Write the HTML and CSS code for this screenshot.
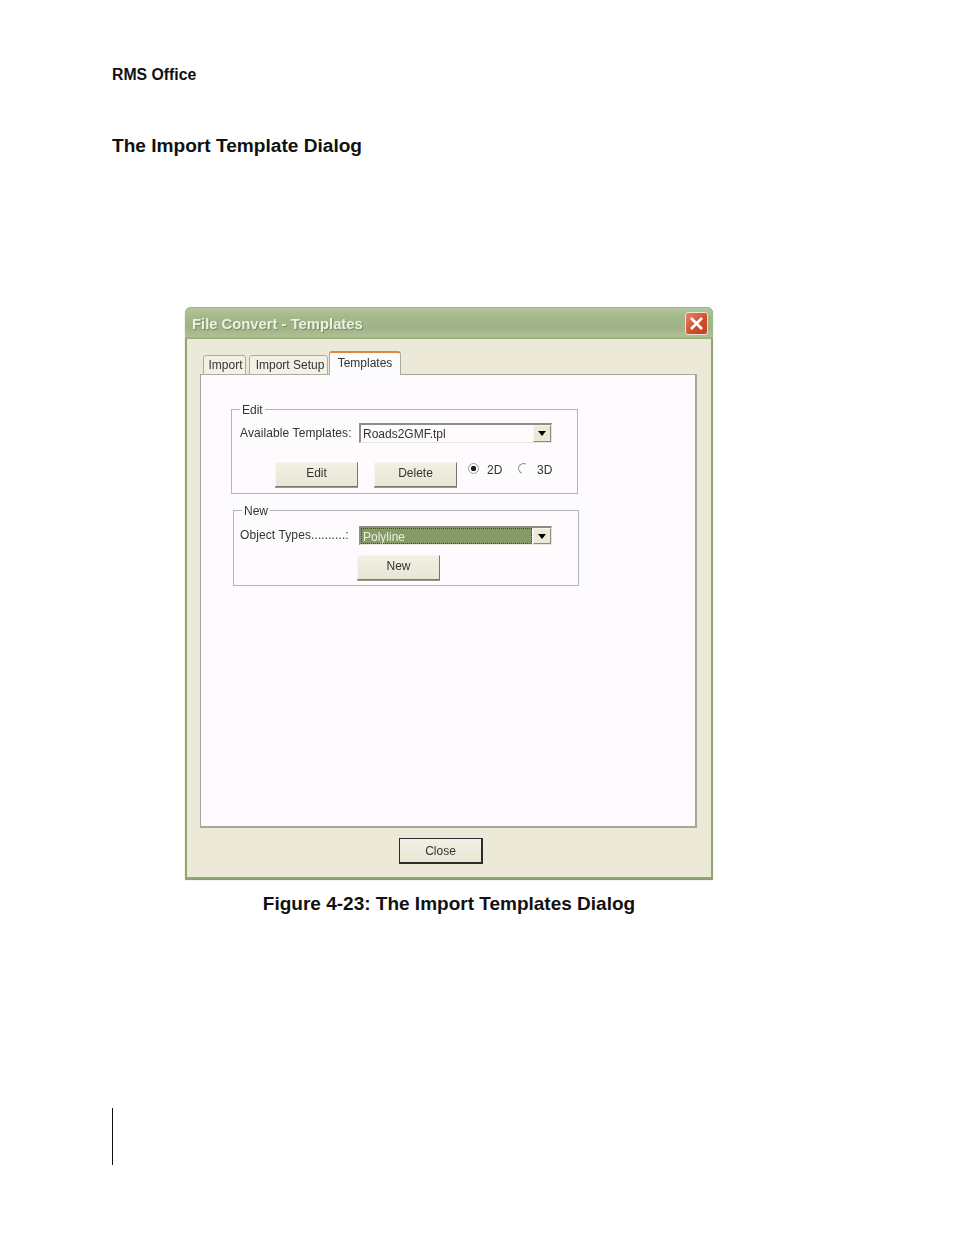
FILE: index.html
```html
<!DOCTYPE html>
<html lang="en">
<head>
<meta charset="utf-8">
<title>The Import Template Dialog</title>
<link rel="stylesheet" href="styles.css">
</head>
<body>
<main class="page">
  <p class="running">RMS Office</p>
  <h1 class="heading">The Import Template Dialog</h1>
  <figure class="figure">
    <div class="dialog">
      <div class="titlebar">
        <span class="title">File Convert - Templates</span>
        <span class="close-x">
          <svg width="23" height="23" viewBox="0 0 23 23"><path d="M6 6 L17 17 M17 6 L6 17" stroke="#fff" stroke-width="2.6" fill="none"/></svg>
        </span>
      </div>
      <div class="body">
        <div class="tabs">
          <span class="tab tab-import">Import</span>
          <span class="tab tab-setup">Import Setup</span>
          <span class="tab tab-active">Templates</span>
        </div>
        <div class="panel">
          <section class="group group-edit">
            <span class="legend legend-edit">Edit</span>
            <div class="row">
              <span class="label">Available Templates:</span>
              <div class="combo"><span class="combo-value">Roads2GMF.tpl</span><span class="arrow"><i class="tri"></i></span></div>
            </div>
            <div class="row row-actions">
              <span class="btn btn-edit">Edit</span>
              <span class="btn btn-delete">Delete</span>
              <span class="radio radio-2d"><i class="dot dot-on"></i>2D</span>
              <span class="radio radio-3d"><i class="dot dot-off"></i>3D</span>
            </div>
          </section>
          <section class="group group-new">
            <span class="legend legend-new">New</span>
            <div class="row">
              <span class="label label-new">Object Types..........:</span>
              <div class="combo combo-new"><span class="combo-value combo-selected">Polyline</span><span class="arrow"><i class="tri"></i></span></div>
            </div>
            <span class="btn btn-new">New</span>
          </section>
        </div>
        <div class="footer"><span class="btn btn-close">Close</span></div>
      </div>
    </div>
    <figcaption class="caption">Figure 4-23: The Import Templates Dialog</figcaption>
  </figure>
  <div class="rule"></div>
</main>
</body>
</html>
```
FILE: styles.css
```css
* { box-sizing: border-box; }
html, body { margin: 0; padding: 0; background: #fff; }
body { width: 954px; height: 1235px; overflow: hidden; font-family: "Liberation Sans", Arial, sans-serif; color: #111; }
.page { padding: 66px 0 0 112px; }
.running { margin: 0; font-size: 15.8px; line-height: 17px; font-weight: 700; }
.heading { margin: 52px 0 0; font-size: 19.1px; line-height: 22px; font-weight: 700; }
.figure { margin: 150px 0 0 73px; width: 528px; }
.dialog { width: 528px; height: 572px; border-radius: 6px 6px 0 0; background: #ece9d8; border: 2px solid #8fa873; border-top: 0; box-shadow: 0 1px 1px #7d9562; font-size: 12px; color: #333; display: flex; flex-direction: column; }
.titlebar { height: 32px; margin: 0 -2px; padding: 0 5px 0 7px; display: flex; align-items: center; justify-content: space-between; border-radius: 6px 6px 0 0; border-top: 1px solid #9db284; border-bottom: 2px solid #9db37f; background: linear-gradient(#b4c69c 0%, #a3b88b 30%, #9fb387 70%, #b0c098 100%); }
.title { font-size: 14.8px; font-weight: 700; color: #eef0e2; text-shadow: 1px 1px 1px #748a5c; filter: blur(.5px); margin-top: 3px; }
.close-x { width: 23px; height: 23px; border-radius: 3px; border: 1px solid #e8e4d8; background: linear-gradient(135deg, #e8856a, #cf4a2a 60%, #c04424); display: flex; align-items: center; justify-content: center; margin-top: 1px; }
.close-x svg { margin: -1px; }
.body { padding: 13px 14px 0 13px; flex: 1; display: flex; flex-direction: column; }
.tabs { height: 23px; display: flex; align-items: flex-end; padding-left: 3px; margin-bottom: -1px; position: relative; z-index: 1; filter: blur(.35px); }
.tab { height: 20px; display: flex; align-items: center; justify-content: center; background: #f3f0e4; border: 1px solid #a9ad9f; border-bottom: 1px solid #a9ad9f; border-radius: 3px 3px 0 0; padding-left: 2px; }
.tab-import { width: 43px; margin-right: 3px; }
.tab-setup { width: 79px; margin-right: 1px; padding-left: 3px; }
.tab-active { width: 72px; height: 24px; background: #fcfbfd; border-color: #a9ad9f; border-top: 2px solid #e3873a; border-bottom: 0; padding: 0 0 3px; }
.panel { flex: 1; height: 453px; border: 1px solid #a3a79c; border-right: 2px solid #a3a79c; border-bottom: 2px solid #a3a79c; background: #fdfbfe; padding: 34px 0 0 30px; }
.group { position: relative; border: 1px solid #b4b4b6; padding: 13px 0 0 8px; filter: blur(.3px); }
.group-edit { width: 347px; height: 85px; }
.group-new { width: 346px; height: 76px; margin: 16px 0 0 2px; padding-top: 15px; padding-left: 6px; }
.legend { position: absolute; top: -7px; background: #fdfbfe; padding: 0 2px; line-height: 14px; }
.legend-edit { left: 8px; }
.legend-new { left: 8px; }
.row { display: flex; align-items: center; }
.label { width: 119px; white-space: nowrap; letter-spacing: .1px; }
.label-new { margin-top: -2px; }
.combo { width: 193px; height: 20px; display: flex; background: #fdfbfc; border: 1px solid #a0a090; border-top: 2px solid #8e8e82; border-left: 2px solid #8e8e82; border-right-color: #e8e6da; border-bottom-color: #e8e6da; }
.combo-new { height: 19px; }
.combo-value { flex: 1; padding: 2px 0 0 2px; line-height: 15px; }
.combo-selected { background: #869a68; color: #e9eede; margin: 0 1px 0 0; outline: 1px dotted #444; outline-offset: -1px; }
.arrow { width: 18px; background: #ece9d8; border: 1px solid; border-color: #f8f6ee #8b8b80 #8b8b80 #f8f6ee; display: flex; align-items: center; justify-content: center; }
.tri { width: 0; height: 0; border: 4px solid transparent; border-top: 5px solid #000; border-bottom: 0; }
.row-actions { align-items: flex-start; margin-top: 19px; padding-left: 35px; }
.btn { width: 83px; height: 25px; display: flex; align-items: center; justify-content: center; padding-bottom: 4px; background: linear-gradient(#f2efe4, #e9e6d6); border: 1px solid; border-color: #f8f6ee #77776c #77776c #f8f6ee; box-shadow: 0 1px 0 #99998c; }
.btn-edit { margin-right: 16px; }
.radio { display: flex; align-items: center; height: 16px; }
.radio-2d { margin-left: 11px; width: 50px; }
.radio-3d { width: 40px; }
.dot { width: 11px; height: 11px; border-radius: 50%; border: 1px solid #9a9a9a; background: #fdfbfe; margin: -4px 8px 0 0; display: flex; }
.dot-on { background: radial-gradient(circle, #222 0 2.5px, #fdfbfe 3px); }
.dot-off { border-color: #8a8a8a transparent transparent #8a8a8a; transform: rotate(-20deg); }
.btn-new { margin: 10px 0 0 117px; }
.footer { height: 49px; padding: 10px 0 0 199px; filter: blur(.3px); }
.btn-close { width: 84px; height: 26px; padding-bottom: 0; border: 2px solid #2c2c2c; border-top-width: 1px; border-left-width: 1px; box-shadow: none; }
.caption { margin-top: 14px; text-align: center; font-size: 19px; line-height: 22px; font-weight: 700; color: #111; }
.rule { width: 1px; height: 57px; background: #111; margin-top: 193px; }
```
